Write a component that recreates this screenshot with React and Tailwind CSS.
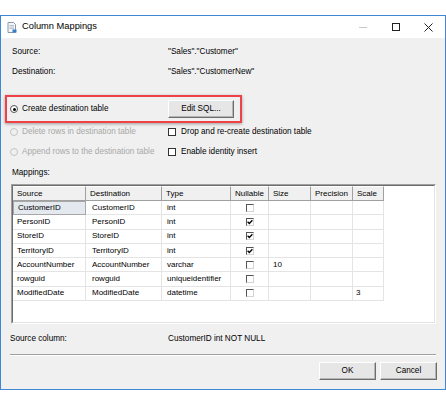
import React from 'react';

const rows = [
  { src: 'CustomerID', dst: 'CustomerID', type: 'int', nul: false, size: '', scale: '' },
  { src: 'PersonID', dst: 'PersonID', type: 'int', nul: true, size: '', scale: '' },
  { src: 'StoreID', dst: 'StoreID', type: 'int', nul: true, size: '', scale: '' },
  { src: 'TerritoryID', dst: 'TerritoryID', type: 'int', nul: true, size: '', scale: '' },
  { src: 'AccountNumber', dst: 'AccountNumber', type: 'varchar', nul: false, size: '10', scale: '' },
  { src: 'rowguid', dst: 'rowguid', type: 'uniqueidentifier', nul: false, size: '', scale: '' },
  { src: 'ModifiedDate', dst: 'ModifiedDate', type: 'datetime', nul: false, size: '', scale: '3' },
];

const Radio = ({ checked, disabled }) => (
  <span
    className={`w-[8px] h-[8px] rounded-full border flex items-center justify-center shrink-0 ${
      disabled ? 'border-[#c4c4c4] bg-[#f0f0f0]' : 'border-[#555] bg-white'
    }`}
  >
    {checked && <span className="w-[3px] h-[3px] rounded-full bg-black" />}
  </span>
);

const Check = ({ checked, grid }) => (
  <span
    className={`w-[8px] h-[8px] bg-white shrink-0 flex items-center justify-center ${
      grid ? 'border-t border-l border-[#555] border-r border-b border-r-[#d4d4d4] border-b-[#d4d4d4]' : 'border border-[#333]'
    }`}
  >
    {checked && (
      <svg width="6" height="6" viewBox="0 0 6 6">
        <path d="M0.6 2.8 L2.3 4.5 L5.4 1.2" stroke="#000" strokeWidth="1.3" fill="none" />
      </svg>
    )}
  </span>
);

const Btn = ({ children, w }) => (
  <button
    className={`${w} h-[18px] bg-[#e6e6e6] border border-t-white border-l-white border-r-[#6d6d6d] border-b-[#6d6d6d] shadow-[inset_-1px_-1px_0_#b5b5b5] flex items-center justify-center text-[8.2px] text-black`}
  >
    {children}
  </button>
);

export default function App() {
  return (
    <div className="w-[446px] h-[405px] bg-white pt-[15px]" style={{ fontFamily: '"Liberation Sans", Arial, sans-serif' }}>
      <div className="w-[446px] h-[375px] border border-[#3d87d4] flex flex-col">
        {/* title bar */}
        <div className="h-[22px] bg-white flex items-center">
          <div className="pl-[6px] pr-[5px] flex items-center">
            <svg width="10" height="11" viewBox="0 0 10 11">
              <path d="M1 0.5 H6.5 L8.5 2.5 V10.5 H1 Z" fill="#f4f6f8" stroke="#8a97a6" strokeWidth="1" />
              <path d="M2.5 3.5 H7 M2.5 5 H7 M2.5 6.5 H7" stroke="#a9b6c4" strokeWidth="0.8" />
              <rect x="5.5" y="7.5" width="4" height="3" fill="#3a7cc8" />
            </svg>
          </div>
          <span className="text-[9.3px] text-black">Column Mappings</span>
          <div className="ml-auto flex h-full">
            <div className="w-[33px] flex items-center justify-center">
              <span className="w-[8px] h-px bg-[#c8c8c8]" />
            </div>
            <div className="w-[33px] flex items-center justify-center">
              <span className="w-[8px] h-[8px] border border-[#222]" />
            </div>
            <div className="w-[33px] flex items-center justify-center">
              <svg width="9" height="9" viewBox="0 0 9 9">
                <path d="M0.5 0.5 L8.5 8.5 M8.5 0.5 L0.5 8.5" stroke="#222" strokeWidth="1" />
              </svg>
            </div>
          </div>
        </div>

        {/* body */}
        <div className="flex-1 bg-[#f0f0f0] flex flex-col text-[8.2px] text-black">
          <div className="h-[14px] mt-[7px] pl-[11px] flex items-center">
            <span className="w-[156px]">Source:</span>
            <span>"Sales"."Customer"</span>
          </div>
          <div className="h-[14px] mt-[6px] pl-[11px] flex items-center">
            <span className="w-[156px]">Destination:</span>
            <span>"Sales"."CustomerNew"</span>
          </div>

          <div className="ml-[4px] mt-[16px] w-[237px] h-[28px] border-2 border-[#ef4148] shadow-[0_1px_3px_rgba(0,0,0,0.35)] flex items-center pl-[3px] pr-[6px]">
            <Radio checked />
            <span className="ml-[4px]">Create destination table</span>
            <div className="ml-auto">
              <Btn w="w-[66px]">Edit SQL...</Btn>
            </div>
          </div>

          <div className="h-[14px] mt-[2px] pl-[9px] flex items-center">
            <span className="w-[158px] flex items-center gap-[4px] text-[#a8a8a8]">
              <Radio disabled />
              Delete rows in destination table
            </span>
            <Check />
            <span className="ml-[5px]">Drop and re-create destination table</span>
          </div>
          <div className="h-[14px] mt-[6px] pl-[9px] flex items-center">
            <span className="w-[158px] flex items-center gap-[4px] text-[#a8a8a8]">
              <Radio disabled />
              Append rows to the destination table
            </span>
            <Check />
            <span className="ml-[5px]">Enable identity insert</span>
          </div>

          <div className="h-[14px] mt-[7px] pl-[11px] flex items-center">Mappings:</div>

          {/* grid */}
          <div className="ml-[10px] mt-[4px] w-[425px] h-[140px] border border-t-[#a0a0a0] border-l-[#a0a0a0] border-r-white border-b-white">
            <div className="w-full h-full bg-white border border-t-[#6d6d6d] border-l-[#6d6d6d] border-r-[#e3e3e3] border-b-[#e3e3e3] text-[8px] flex flex-col">
              <div className="flex h-[15px]">
                {[
                  ['Source', 'w-[73px]'],
                  ['Destination', 'w-[76px]'],
                  ['Type', 'w-[69px]'],
                  ['Nullable', 'w-[38px]'],
                  ['Size', 'w-[42px]'],
                  ['Precision', 'w-[42px]'],
                  ['Scale', 'w-[31px]'],
                ].map(([t, w]) => (
                  <div
                    key={t}
                    className={`${w} h-full bg-[#f0f0f0] border-r border-b border-[#a0a0a0] border-t border-t-white flex items-center pl-[4px]`}
                  >
                    {t}
                  </div>
                ))}
              </div>
              {rows.map((r, i) => (
                <div key={r.src} className="flex h-[14.3px]">
                  <div
                    className={`w-[73px] h-full flex items-center pl-[4px] ${
                      i === 0 ? 'bg-[#e4e9ef] border border-[#a7a7a7]' : 'border-r border-b border-[#e4e4e4]'
                    }`}
                  >
                    {r.src}
                  </div>
                  <div className="w-[76px] h-full flex items-center pl-[6px] border-r border-b border-[#e4e4e4]">{r.dst}</div>
                  <div className="w-[69px] h-full flex items-center pl-[5px] border-r border-b border-[#e4e4e4]">{r.type}</div>
                  <div className="w-[38px] h-full flex items-center justify-center border-r border-b border-[#e4e4e4]">
                    <Check grid checked={r.nul} />
                  </div>
                  <div className="w-[42px] h-full flex items-center pl-[4px] border-r border-b border-[#e4e4e4]">{r.size}</div>
                  <div className="w-[42px] h-full flex items-center pl-[4px] border-r border-b border-[#e4e4e4]"></div>
                  <div className="w-[31px] h-full flex items-center pl-[3px] border-r border-b border-[#e4e4e4]">{r.scale}</div>
                </div>
              ))}
            </div>
          </div>

          <div className="h-[14px] mt-[8px] pl-[9px] flex items-center">
            <span className="w-[158px]">Source column:</span>
            <span>CustomerID int NOT NULL</span>
          </div>

          <div className="ml-[9px] mt-[8px] w-[426px] border-t border-[#a0a0a0] border-b border-b-white" />

          <div className="mt-[6px] pr-[8px] flex justify-end gap-[4px]">
            <Btn w="w-[57px]">OK</Btn>
            <Btn w="w-[57px]">Cancel</Btn>
          </div>
        </div>
      </div>
    </div>
  );
}
